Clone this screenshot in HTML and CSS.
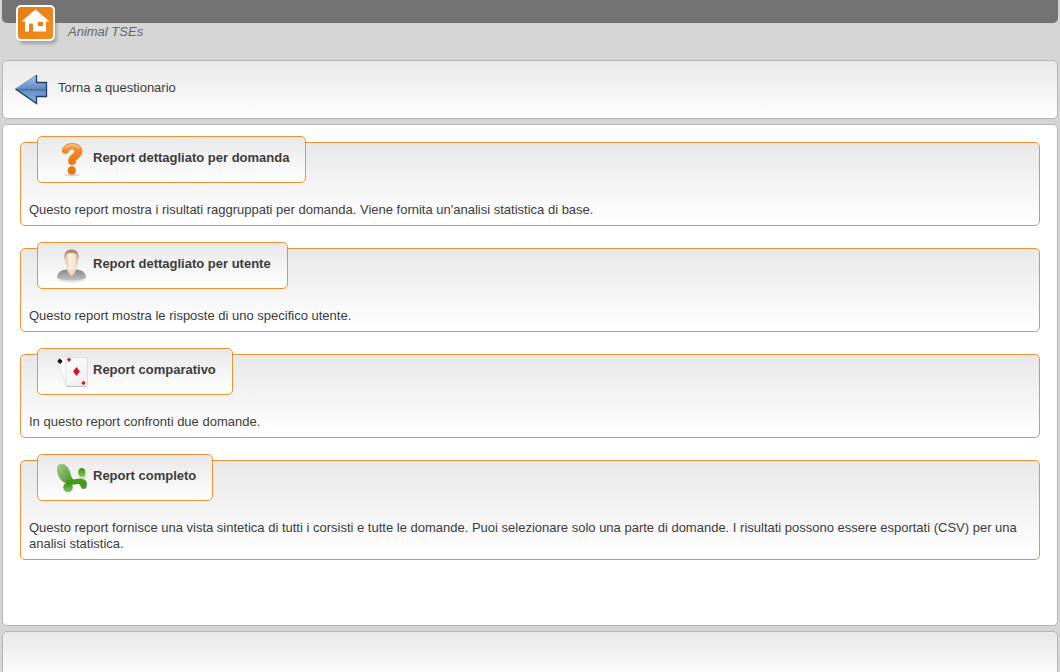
FILE: index.html
```
<!DOCTYPE html>
<html lang="it">
<head>
<meta charset="utf-8">
<title>Animal TSEs</title>
<link rel="stylesheet" href="styles.css">
</head>
<body>
<header class="header">
  <div class="topbar"></div>
  <nav class="crumbs">
    <a class="home" href="#" aria-label="Home">
      <svg width="44" height="44" viewBox="0 0 44 44" aria-hidden="true">
        <defs>
          <linearGradient id="home-fill" x1="0" y1="0" x2="1" y2="1"><stop offset="0" stop-color="#e67c12"/><stop offset="1" stop-color="#f28e20"/></linearGradient>
          <filter id="home-shadow" x="-20%" y="-20%" width="150%" height="150%"><feGaussianBlur stdDeviation="1.5"/></filter>
        </defs>
        <rect x="3" y="3" width="38" height="36" rx="5" fill="#777" opacity=".5" filter="url(#home-shadow)"/>
        <rect x="1" y="1" width="37" height="34" rx="4" fill="url(#home-fill)" stroke="#fff" stroke-width="2"/>
        <path d="M19.500 4.500 33.500 16.500h-3.500v10H17v-8h-4v8H9v-10H5.500z" fill="#fff"/>
        <path d="M22 17h5v4h-5z" fill="#e97f15"/>
      </svg>
    </a>
    <span class="course">Animal TSEs</span>
  </nav>
</header>

<div class="panel toolbar">
  <a class="back" href="#">
    <svg width="34" height="32" viewBox="0 0 34 32" aria-hidden="true">
      <defs><linearGradient id="arrow-fill" x1="0" y1="0" x2="0" y2="1"><stop offset="0" stop-color="#a9c4e6"/><stop offset=".3" stop-color="#7da3d2"/><stop offset=".54" stop-color="#5580b9"/><stop offset=".58" stop-color="#6792c9"/><stop offset="1" stop-color="#8bb4e2"/></linearGradient></defs>
      <path d="M1.500 16 22.500 2v7.500h10v14h-10V30.500z" fill="url(#arrow-fill)"/>
      <path d="M1.500 16 22.500 2" fill="none" stroke="#7896bb" stroke-width="1"/>
      <path d="M22.500 2v7.500h10v14h-10V30.500L1.500 16" fill="none" stroke="#1c3b66" stroke-width="1.300"/>
      <path d="M4 16.500h27" stroke="#315f9e" stroke-width="1" opacity=".5"/>
    </svg>
    <span>Torna a questionario</span>
  </a>
</div>

<main class="panel reports">
  <section class="report">
    <h2 class="report-title"><a class="tab" href="#">
      <svg width="32" height="36" viewBox="0 0 32 36" aria-hidden="true">
        <defs><linearGradient id="q-fill" x1="0" y1="0" x2="0" y2="1"><stop offset="0" stop-color="#f9b066"/><stop offset=".35" stop-color="#f08a2c"/><stop offset="1" stop-color="#ea760d"/></linearGradient></defs>
        <ellipse cx="16" cy="33" rx="8" ry="1.500" fill="#bbb" opacity=".5"/>
        <path d="M6 9C7 4 11 1.500 16 1.500c6 0 10 3 10 7.700 0 3.800-2.200 5.600-4.300 7.300-2 1.600-2.700 2.700-2.300 5-1.800 1.500-4.900 1.500-6.600 0-.9-4 .4-6.500 3.200-8.800 1.800-1.500 2.900-2.200 2.700-3.700-.2-1.400-1.300-2-2.900-2-2.400 0-3.400 1.500-3.800 3.800C9.500 12 6.500 11.500 6 9z" fill="url(#q-fill)" stroke="#e58127" stroke-width=".8"/>
        <circle cx="15.800" cy="28.500" r="4.200" fill="#eb780f"/>
        <path d="M9 6.500c3-4.500 11-5 14 0" fill="none" stroke="#fbc58d" stroke-width="1.500" opacity=".8"/>
      </svg>
      <span>Report dettagliato per domanda</span>
    </a></h2>
    <p class="report-text">Questo report mostra i risultati raggruppati per domanda. Viene fornita un'analisi statistica di base.</p>
  </section>

  <section class="report">
    <h2 class="report-title"><a class="tab" href="#">
      <svg width="32" height="36" viewBox="0 0 32 36" aria-hidden="true">
        <defs>
          <linearGradient id="shirt" x1="0" y1="0" x2="0" y2="1"><stop offset="0" stop-color="#858585"/><stop offset="1" stop-color="#c4c4c4"/></linearGradient>
          <linearGradient id="skin" x1="0" y1="0" x2="1" y2="0"><stop offset="0" stop-color="#dfc1a3"/><stop offset=".35" stop-color="#fbeede"/><stop offset=".75" stop-color="#f8e4ce"/><stop offset="1" stop-color="#d8b594"/></linearGradient>
        </defs>
        <ellipse cx="15.500" cy="31.500" rx="13" ry="3" fill="#e3e3e3"/>
        <path d="M1 30c0-5 3-7.500 9-8.500h11c6 1 9 3.500 9 8.500-5 3.300-24 3.300-29 0z" fill="url(#shirt)"/>
        <path d="M11 17h9v5c-1 3-2.500 5-4.500 6-2-1-3.500-3-4.500-6z" fill="#ecd5be"/>
        <path d="M9 9c0-4 2.500-6 6.500-6S22 5 22 9c0 3 0 7-2 10-1.500 2.500-2.500 3.500-4.500 3.500S12.500 21.500 11 19C9 16 9 12 9 9z" fill="url(#skin)"/>
        <path d="M8.800 12C7.500 4.500 10.500 1.500 15.500 1.500S23.500 4.500 22.200 12l-1.400-6c-3-1.500-8-1.500-10.700 0z" fill="#b18e6d"/>
      </svg>
      <span>Report dettagliato per utente</span>
    </a></h2>
    <p class="report-text">Questo report mostra le risposte di uno specifico utente.</p>
  </section>

  <section class="report">
    <h2 class="report-title"><a class="tab" href="#">
      <svg width="32" height="36" viewBox="0 0 32 36" aria-hidden="true">
        <defs><linearGradient id="card-fill" x1="0" y1="0" x2="1" y2="1"><stop offset="0" stop-color="#fff"/><stop offset="1" stop-color="#eee"/></linearGradient></defs>
        <path d="M1 6 15 1l8 25-13 5z" fill="#fbfbfb" stroke="#ddd" stroke-width=".8"/>
        <path d="M3.500 5 6 7 4.500 9.500 1.800 7.500z" fill="#111" stroke="#111"/>
        <rect x="10" y="3.500" width="21.500" height="28.500" rx="2" fill="url(#card-fill)" stroke="#d8d8d8" stroke-width=".8"/>
        <path d="M10 32.500h21" stroke="#c4c4c4" stroke-width="1"/>
        <g fill="#cf1826"><path d="m13 3.500 2.200 2.200-2.200 2.200-2.200-2.200zM20.500 13l3.500 4.500-3.500 4.500-3.500-4.500zM27.500 26.800l2.200 2.200-2.200 2.200-2.200-2.200z"/></g>
      </svg>
      <span>Report comparativo</span>
    </a></h2>
    <p class="report-text">In questo report confronti due domande.</p>
  </section>

  <section class="report">
    <h2 class="report-title"><a class="tab" href="#">
      <svg width="32" height="36" viewBox="0 0 32 36" aria-hidden="true">
        <defs>
          <linearGradient id="leaf" x1="0" y1="0" x2="1" y2="1"><stop offset="0" stop-color="#a5cd91"/><stop offset=".5" stop-color="#73ae57"/><stop offset="1" stop-color="#47941f"/></linearGradient>
          <linearGradient id="ball" x1="0" y1="0" x2="0" y2="1"><stop offset="0" stop-color="#3d8c1d"/><stop offset="1" stop-color="#86c85b"/></linearGradient>
        </defs>
        <path d="M3 4.500C7 2 12 5.500 14 12c1 3.500 1.500 6 3.500 7.500L14 23.500C8 24.500 3 19 1.500 13.500.5 9.500.8 6 3 4.500z" fill="url(#leaf)"/>
        <path d="M10 19.500c6 1 10-1 14-1 4.500 0 7 2.500 7 5.500s-1.500 5-3.500 5c-3 0-2.500-4.500-5-5-3-.5-5.500 1.500-9 .5-2-.5-3.500-2-3.500-5z" fill="#439a1d"/>
        <circle cx="12" cy="27.500" r="4.800" fill="url(#ball)"/>
        <ellipse cx="25.800" cy="12.500" rx="3.600" ry="4.500" fill="url(#ball)"/>
        <path d="M29 15c.3 2.500-1 4-3 4" fill="none" stroke="#9fcf86" stroke-width="1"/>
      </svg>
      <span>Report completo</span>
    </a></h2>
    <p class="report-text">Questo report fornisce una vista sintetica di tutti i corsisti e tutte le domande. Puoi selezionare solo una parte di domande. I risultati possono essere esportati (CSV) per una analisi statistica.</p>
  </section>
</main>

<footer class="panel footer"></footer>
</body>
</html>
```
FILE: styles.css
```
* {
  box-sizing: border-box;
}

body {
  display: flex;
  flex-direction: column;
  min-height: 100vh;
  margin: 0;
  padding: 0 2px;
  background: #d5d5d5;
  color: #3c3c3c;
  font: 13px/16px "Liberation Sans", Arial, sans-serif;
}

a {
  color: inherit;
  text-decoration: none;
}

svg {
  display: block;
  flex: none;
}

.header {
  height: 60px;
}

.topbar {
  height: 23px;
  border-radius: 0 0 5px 5px;
  background: #737373;
}

.crumbs {
  display: flex;
  align-items: center;
  gap: 8px;
  margin-top: -18px;
  padding-left: 14px;
}

.course {
  padding-top: 10px;
  color: #666;
  font-style: italic;
}

.panel {
  border: 1px solid #b5b7b7;
  border-radius: 5px;
}

.toolbar {
  display: flex;
  margin-bottom: 5px;
  padding: 12px 11px 13px;
  background: linear-gradient(#e8e8e8, #fff);
}

.back {
  display: flex;
  align-items: center;
  gap: 10px;
}

.back span {
  padding-bottom: 2px;
}

.reports {
  display: flex;
  flex: 1;
  flex-direction: column;
  gap: 22px;
  padding: 17px;
  background: #fff;
}

.report {
  padding: 0 8px 7px;
  border: 1px solid #ef9234;
  border-radius: 5px;
  background: linear-gradient(#e8e8e8, #fff) padding-box;
}

.report-title {
  display: flex;
  margin: -7px 0 19px 8px;
  font-size: 13px;
}

.tab {
  display: flex;
  align-items: center;
  gap: 5px;
  height: 47px;
  padding: 0 16px 0 18px;
  border: 1px solid #ef9234;
  border-radius: 5px;
  background: linear-gradient(#e8e8e8, #fff) padding-box;
}

.tab span {
  padding-bottom: 4px;
}

.report-text {
  margin: 0;
}

.footer {
  height: 41px;
  margin-top: 5px;
  border-bottom: 0;
  border-radius: 5px 5px 0 0;
  background: linear-gradient(#e8e8e8, #fff 48px);
}
```
